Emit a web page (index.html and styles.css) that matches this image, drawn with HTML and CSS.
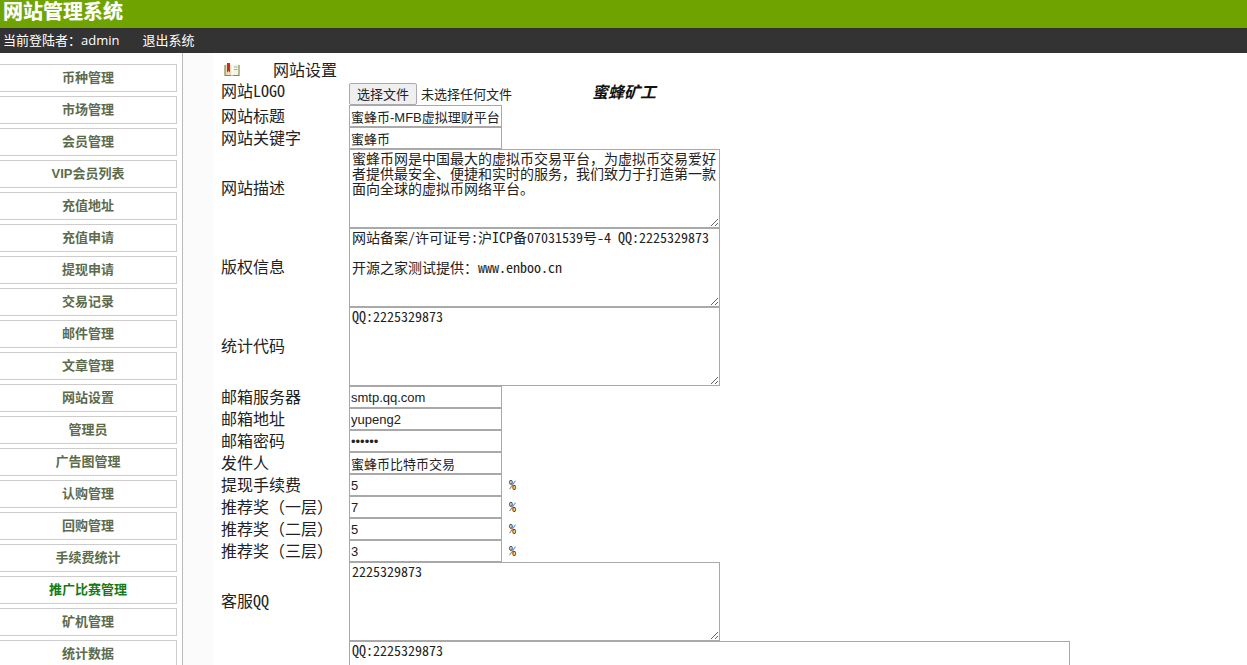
FILE: index.html
```html
<!DOCTYPE html>
<html lang="zh-CN">
<head>
  <meta charset="UTF-8">
  <title>网站管理系统</title>
  <link rel="stylesheet" href="styles.css">
</head>
<body>
  <header class="top">
    <h1 class="top-title">网站管理系统</h1>
    <div class="top-user">
      <span>当前登陆者：admin</span>
      <a href="#">退出系统</a>
    </div>
  </header>

  <div class="wrap">
    <ul class="menu">
      <li><a href="#">币种管理</a></li>
      <li><a href="#">市场管理</a></li>
      <li><a href="#">会员管理</a></li>
      <li><a href="#">VIP会员列表</a></li>
      <li><a href="#">充值地址</a></li>
      <li><a href="#">充值申请</a></li>
      <li><a href="#">提现申请</a></li>
      <li><a href="#">交易记录</a></li>
      <li><a href="#">邮件管理</a></li>
      <li><a href="#">文章管理</a></li>
      <li><a href="#">网站设置</a></li>
      <li><a href="#">管理员</a></li>
      <li><a href="#">广告图管理</a></li>
      <li><a href="#">认购管理</a></li>
      <li><a href="#">回购管理</a></li>
      <li><a href="#">手续费统计</a></li>
      <li><a href="#" class="on">推广比赛管理</a></li>
      <li><a href="#">矿机管理</a></li>
      <li><a href="#">统计数据</a></li>
    </ul>

    <main class="main">
      <form>
        <table class="form-table">
          <tr class="title-row">
            <td colspan="2">
              <div class="title-line">
                <svg class="book" width="16" height="13" viewBox="0 0 16 13">
                  <path d="M1 1.500h6.500V12H1z" fill="#e9dcb8"/>
                  <path d="M8.500 1.500H15V12H8.500z" fill="#f3f4e6"/>
                  <path d="M3 0h3v9.500L4.500 8 3 9.500z" fill="#c22f2a"/>
                  <path d="M1 2v10.500h6.500M15 2v10.500H8.500" fill="none" stroke="#7f8f52" stroke-width="1.200"/>
                  <path d="M10 4h3.500M10 6.500h3.500" stroke="#a9b78a" stroke-width="1"/>
                </svg>
                <span>网站设置</span>
              </div>
            </td>
          </tr>
          <tr class="logo-row">
            <td class="label">网站LOGO</td>
            <td>
              <div class="file-line">
                <button type="button" class="file-btn">选择文件</button>
                <span class="file-name">未选择任何文件</span>
                <span class="logo-pic">蜜蜂矿工</span>
              </div>
            </td>
          </tr>
          <tr>
            <td class="label">网站标题</td>
            <td><input class="txt" type="text" value="蜜蜂币-MFB虚拟理财平台"></td>
          </tr>
          <tr>
            <td class="label">网站关键字</td>
            <td><input class="txt" type="text" value="蜜蜂币"></td>
          </tr>
          <tr>
            <td class="label label-area">网站描述</td>
            <td><textarea class="area">蜜蜂币网是中国最大的虚拟币交易平台，为虚拟币交易爱好者提供最安全、便捷和实时的服务，我们致力于打造第一款面向全球的虚拟币网络平台。</textarea></td>
          </tr>
          <tr>
            <td class="label label-area">版权信息</td>
            <td><textarea class="area">网站备案/许可证号:沪ICP备07031539号-4 QQ:2225329873

开源之家测试提供：www.enboo.cn</textarea></td>
          </tr>
          <tr>
            <td class="label label-area">统计代码</td>
            <td><textarea class="area">QQ:2225329873</textarea></td>
          </tr>
          <tr>
            <td class="label">邮箱服务器</td>
            <td><input class="txt" type="text" value="smtp.qq.com"></td>
          </tr>
          <tr>
            <td class="label">邮箱地址</td>
            <td><input class="txt" type="text" value="yupeng2"></td>
          </tr>
          <tr>
            <td class="label">邮箱密码</td>
            <td><input class="txt" type="password" value="123456"></td>
          </tr>
          <tr>
            <td class="label">发件人</td>
            <td><input class="txt" type="text" value="蜜蜂币比特币交易"></td>
          </tr>
          <tr>
            <td class="label">提现手续费</td>
            <td><input class="txt" type="text" value="5"><span class="pct">%</span></td>
          </tr>
          <tr>
            <td class="label">推荐奖（一层）</td>
            <td><input class="txt" type="text" value="7"><span class="pct">%</span></td>
          </tr>
          <tr>
            <td class="label">推荐奖（二层）</td>
            <td><input class="txt" type="text" value="5"><span class="pct">%</span></td>
          </tr>
          <tr>
            <td class="label">推荐奖（三层）</td>
            <td><input class="txt" type="text" value="3"><span class="pct">%</span></td>
          </tr>
          <tr>
            <td class="label label-area">客服QQ</td>
            <td><textarea class="area">2225329873</textarea></td>
          </tr>
          <tr>
            <td class="label"></td>
            <td><textarea class="area area-wide">QQ:2225329873</textarea></td>
          </tr>
        </table>
      </form>
    </main>
  </div>
</body>
</html>
```

FILE: styles.css
```css
html, body {
  margin: 0;
  padding: 0;
  height: 100%;
  overflow: hidden;
}

body {
  font-family: "Open Sans", "Noto Sans CJK SC", sans-serif;
  background: #fff;
  color: #222;
}

.top-title {
  margin: 0;
  height: 28px;
  padding-left: 3px;
  background: #6fa400;
  color: #fff;
  font-size: 20px;
  font-weight: 700;
  line-height: 24px;
  text-shadow: 0 0 1px rgba(255,255,255,0.5);
}

.top-user {
  display: flex;
  gap: 23px;
  height: 25px;
  padding-left: 3px;
  background: #333;
  color: #fff;
  font-size: 13px;
  line-height: 25px;
}

.top-user a {
  color: #fff;
  text-decoration: none;
}

.wrap {
  display: flex;
  height: calc(100vh - 53px);
  overflow: hidden;
}

.menu {
  flex: none;
  display: flex;
  flex-direction: column;
  gap: 4px;
  width: 182px;
  margin: 0;
  padding: 11px 0 0;
  border-right: 1px solid #bbb;
  list-style: none;
}

.menu a {
  display: block;
  box-sizing: border-box;
  width: 177px;
  height: 28px;
  border: 1px solid #ccc;
  border-left: none;
  color: #5d6b4c;
  font-family: "Liberation Sans", "Noto Sans CJK SC", sans-serif;
  font-size: 13px;
  font-weight: 700;
  line-height: 26px;
  text-align: center;
  text-decoration: none;
}

.menu a.on {
  color: #167a16;
}

.main {
  flex: 1;
  padding: 5px 0 0 8px;
  border-left: 30px solid #fbfbfb;
  font-family: "Noto Sans Mono CJK SC", "Noto Sans CJK SC", monospace;
}

.form-table {
  border-collapse: collapse;
}

.form-table td {
  padding: 0;
  line-height: 22px;
  vertical-align: middle;
}

.form-table .label {
  width: 128px;
  padding-bottom: 2px;
  font-size: 16px;
  line-height: 20px;
  color: #222;
}

.form-table .label-area {
  padding-bottom: 4px;
}

.form-table .logo-row .label {
  padding-bottom: 6px;
  line-height: 17px;
}

.title-row td {
  height: 24px;
}

.title-line {
  display: flex;
  align-items: center;
  gap: 33px;
  height: 22px;
  padding: 0 0 2px 3px;
  font-size: 16px;
}

.book {
  display: block;
}

.file-line {
  display: flex;
  align-items: center;
  height: 23px;
  font-size: 13px;
}

.file-btn {
  box-sizing: border-box;
  width: 68px;
  height: 22px;
  padding: 0;
  border: 1px solid #aaa;
  border-radius: 2px;
  background: #efefef;
  color: #222;
  font-family: inherit;
  font-size: 13px;
}

.file-name {
  margin-left: 4px;
}

.logo-pic {
  margin: -6px 0 0 80px;
  color: #111;
  font-family: "Noto Sans CJK SC", sans-serif;
  font-size: 16px;
  font-style: italic;
  font-weight: 700;
}

.txt {
  box-sizing: border-box;
  width: 153px;
  height: 22px;
  margin: 0;
  padding: 1px;
  border: 1px solid #a9a9a9;
  color: #222;
  font-family: "Liberation Sans", "Noto Sans CJK SC", sans-serif;
  font-size: 13px;
  vertical-align: top;
}

.pct {
  margin-left: 7px;
  font-size: 14px;
  line-height: 20px;
  vertical-align: top;
}

.area {
  display: block;
  box-sizing: border-box;
  width: 371px;
  height: 79px;
  margin: 0;
  padding: 1px 2px;
  border: 1px solid #a9a9a9;
  color: #222;
  font-family: "Noto Sans Mono CJK SC", "Noto Sans CJK SC", monospace;
  font-size: 14px;
  line-height: 15px;
}

.area-wide {
  width: 721px;
}
```
